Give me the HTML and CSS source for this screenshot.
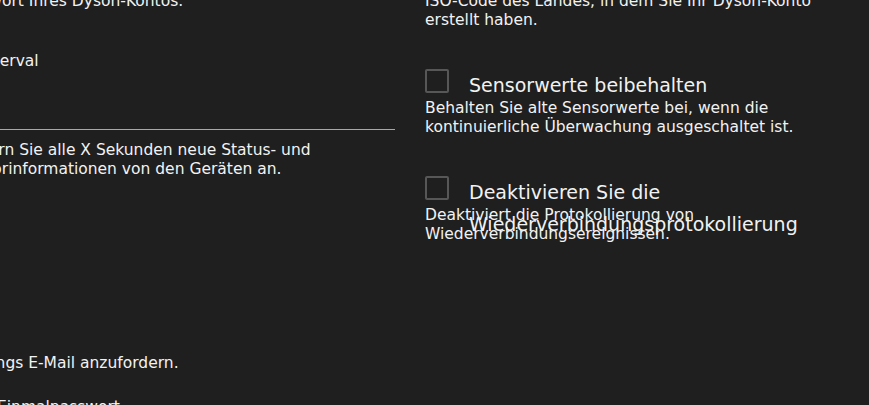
FILE: index.html
```html
<!DOCTYPE html>
<html lang="de">
<head>
    <meta charset="UTF-8">
    <meta name="viewport" content="width=device-width, initial-scale=1.0">
    <title>Dyson Einstellungen</title>
    <link rel="stylesheet" href="styles.css">
</head>
<body>
    <div class="settings">
        <div class="column">
            <div class="desc">Passwort Ihres Dyson-Kontos.</div>

            <div class="field">
                <label class="field-label">Ist-Interval</label>
                <div class="field-input"></div>
            </div>
            <div class="desc desc-field">Fordern Sie alle X Sekunden neue Status- und Sensorinformationen von den Geräten an.</div>

            <div class="desc desc-mail">Prüfungs E-Mail anzufordern.</div>

            <div class="field-label field-otp">Mein Einmalpasswort</div>
        </div>

        <div class="column">
            <div class="desc">ISO-Code des Landes, in dem Sie Ihr Dyson-Konto erstellt haben.</div>

            <div class="option">
                <label class="check-row">
                    <span class="checkbox"></span>
                    <span class="check-label">Sensorwerte beibehalten</span>
                </label>
                <div class="desc">Behalten Sie alte Sensorwerte bei, wenn die kontinuierliche Überwachung ausgeschaltet ist.</div>
            </div>

            <div class="option">
                <label class="check-row">
                    <span class="checkbox"></span>
                    <span class="check-label">Deaktivieren Sie die Wiederverbindungsprotokollierung</span>
                </label>
                <div class="desc">Deaktiviert die Protokollierung von Wiederverbindungsereignissen.</div>
            </div>
        </div>
    </div>
</body>
</html>
```

FILE: styles.css
```css
body {
    margin: 0;
    background-color: #1f1f1f;
    color: #f2f2f2;
    font-family: 'DejaVu Sans', 'Liberation Sans', sans-serif;
    overflow: hidden;
    height: 405px;
}
.settings {
    display: grid;
    grid-template-columns: 440px 440px;
    column-gap: 30px;
    margin-left: -45px;
    margin-top: -8px;
}
.column {
    display: flex;
    flex-direction: column;
}
.desc {
    font-size: 15.5px;
    line-height: 19px;
}
.field {
    margin-top: 40px;
}
.field-label {
    display: block;
    font-size: 15.5px;
    line-height: 20px;
}
.field-input {
    height: 58px;
    border-bottom: 1px solid #a8a8a8;
}
.desc-field {
    margin-top: 11px;
}
.desc-mail {
    margin-top: 175px;
}
.field-otp {
    margin-top: 24px;
}
.option {
    margin-top: 39px;
}
.check-row {
    display: flex;
    align-items: flex-start;
    gap: 20px;
    height: 30px;
}
.checkbox {
    flex: none;
    width: 20px;
    height: 20px;
    border: 2px solid #575757;
    border-radius: 2px;
}
.check-label {
    font-size: 19px;
    line-height: 32px;
}
```
